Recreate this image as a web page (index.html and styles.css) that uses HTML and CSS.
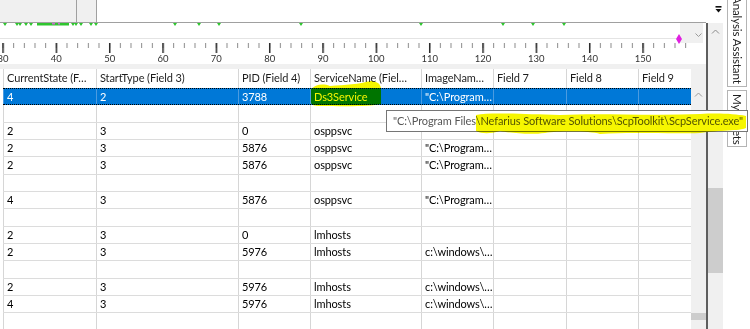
FILE: index.html
```html
<!DOCTYPE html>
<html lang="en">
  <head>
    <meta charset="UTF-8" />
    <meta name="viewport" content="width=device-width, initial-scale=1.0" />
    <title>Message Analyzer</title>

    <link rel="stylesheet" href="styles.css">
  </head>

  <body>
    <div class="app">
      <div class="main">
        <div class="topbar">
          <div class="strip">
            <div class="tabbox"><span></span></div>
          </div>
          <svg class="customize" width="7" height="7" viewBox="0 0 7 7">
            <rect x="0.5" y="0" width="6" height="1.6" fill="#111" />
            <polygon points="0.5,3 6.5,3 3.5,6.5" fill="#111" />
          </svg>
        </div>

        <div class="work">
          <div class="content">
            <!-- timeline overview + ruler -->
            <svg class="ruler" width="706" height="41" viewBox="0 0 706 41">
              <defs>
                <pattern id="minor" x="2.5" y="0" width="10.6667" height="41" patternUnits="userSpaceOnUse">
                  <rect x="0" y="20" width="1" height="5" fill="#8a8a8a" />
                </pattern>
                <pattern id="major" x="2.3" y="0" width="53.3333" height="41" patternUnits="userSpaceOnUse">
                  <rect x="0" y="20" width="1.5" height="10" fill="#2a2a2a" />
                </pattern>
              </defs>
              <line x1="0" y1="15.5" x2="680" y2="15.5" stroke="#e4e4e4" />
              <rect x="680" y="0" width="23" height="20" fill="#f0f0f0" />
              <polyline points="695.5,10.5 698.5,13.5 701.5,10.5" fill="none" stroke="#9a9a9a" />

              <g fill="#2ec52e">
                <polygon points="3,0 7,0 5,3" />
                <polygon points="15,0 19,0 17,3" />
                <polygon points="18,0 22,0 20,3" />
                <polygon points="24,0 28,0 26,3" />
                <polygon points="29,0 33,0 31,3" />
                <rect x="37" y="0" width="32" height="2.5" />
                <polygon points="71,0 75,0 73,3" />
                <polygon points="74,0 78,0 76,3" />
                <polygon points="79,0 83,0 81,3" />
                <polygon points="89,0 93,0 91,3" />
                <polygon points="94,0 98,0 96,3" />
                <polygon points="173,0 177,0 175,3" />
                <polygon points="197,0 201,0 199,3" />
                <polygon points="217,0 221,0 219,3" />
                <polygon points="299,0 303,0 301,3" />
                <polygon points="419,0 423,0 421,3" />
                <polygon points="501,0 505,0 503,3" />
                <polygon points="531,0 535,0 533,3" />
                <polygon points="562,0 566,0 564,3" />
              </g>
              <g fill="#c86ad0">
                <rect x="52" y="0" width="3" height="1.5" />
                <rect x="58" y="0" width="2" height="1.5" />
              </g>
              <polygon points="679,11 682,16 679,21 676,16" fill="#e020e0" />

              <rect x="0" y="0" width="688" height="41" fill="url(#minor)" />
              <rect x="0" y="0" width="690" height="41" fill="url(#major)" />
              <text x="3" y="38.5">30</text>
              <text x="56.3" y="38.5">40</text>
              <text x="109.7" y="38.5">50</text>
              <text x="163" y="38.5">60</text>
              <text x="216.3" y="38.5">70</text>
              <text x="269.7" y="38.5">80</text>
              <text x="323" y="38.5">90</text>
              <text x="376.3" y="38.5">100</text>
              <text x="429.7" y="38.5">110</text>
              <text x="483" y="38.5">120</text>
              <text x="536.3" y="38.5">130</text>
              <text x="589.7" y="38.5">140</text>
              <text x="643" y="38.5">150</text>
            </svg>
            <div class="band"></div>

            <div class="gridwrap">
              <div class="grid">
                <div class="row head">
                  <span>CurrentState (F…</span><span>StartType (Field 3)</span><span>PID (Field 4)</span><span>ServiceName (Fiel…</span><span>ImageNam…</span><span>Field 7</span><span>Field 8</span><span>Field 9</span>
                </div>
                <div class="row sel">
                  <span>4</span><span>2</span><span>3788</span><span>Ds3Service</span><span>"C:\Program…</span><span></span><span></span><span></span>
                </div>
                <div class="row">
                  <span></span><span></span><span></span><span></span><span></span><span></span><span></span><span></span>
                </div>
                <div class="row">
                  <span>2</span><span>3</span><span>0</span><span>osppsvc</span><span></span><span></span><span></span><span></span>
                </div>
                <div class="row">
                  <span>2</span><span>3</span><span>5876</span><span>osppsvc</span><span>"C:\Program…</span><span></span><span></span><span></span>
                </div>
                <div class="row">
                  <span>2</span><span>3</span><span>5876</span><span>osppsvc</span><span>"C:\Program…</span><span></span><span></span><span></span>
                </div>
                <div class="row">
                  <span></span><span></span><span></span><span></span><span></span><span></span><span></span><span></span>
                </div>
                <div class="row">
                  <span>4</span><span>3</span><span>5876</span><span>osppsvc</span><span>"C:\Program…</span><span></span><span></span><span></span>
                </div>
                <div class="row">
                  <span></span><span></span><span></span><span></span><span></span><span></span><span></span><span></span>
                </div>
                <div class="row">
                  <span>2</span><span>3</span><span>0</span><span>lmhosts</span><span></span><span></span><span></span><span></span>
                </div>
                <div class="row">
                  <span>2</span><span>3</span><span>5976</span><span>lmhosts</span><span>c:\windows\…</span><span></span><span></span><span></span>
                </div>
                <div class="row">
                  <span></span><span></span><span></span><span></span><span></span><span></span><span></span><span></span>
                </div>
                <div class="row">
                  <span>2</span><span>3</span><span>5976</span><span>lmhosts</span><span>c:\windows\…</span><span></span><span></span><span></span>
                </div>
                <div class="row">
                  <span>4</span><span>3</span><span>5976</span><span>lmhosts</span><span>c:\windows\…</span><span></span><span></span><span></span>
                </div>
                <div class="row">
                  <span></span><span></span><span></span><span></span><span></span><span></span><span></span><span></span>
                </div>
              </div>
              <div class="vscroll">
                <svg class="caret" width="9" height="5" viewBox="0 0 9 5">
                  <polyline points="1,4.5 4.5,1 8,4.5" fill="none" stroke="#9a9a9a" />
                </svg>
                <span class="nub"></span>
              </div>
            </div>
          </div>

          <div class="splitter"></div>

          <div class="outerscroll">
            <svg class="caret" width="9" height="5" viewBox="0 0 9 5">
              <polyline points="1,4.5 4.5,1 8,4.5" fill="none" stroke="#8a8a8a" />
            </svg>
            <span class="thumb"></span>
          </div>
        </div>
      </div>

      <div class="side">
        <div class="vtab first">Analysis Assistant</div>
        <div class="vtab">My Assets</div>
      </div>

      <div class="tooltip">"C:\Program Files\Nefarius Software Solutions\ScpToolkit\ScpService.exe"</div>

      <!-- highlighter marks on top of the screenshot -->
      <svg class="marker" width="750" height="329" viewBox="0 0 750 329">
        <path d="M311,89 C315,85 322,83 330,86 C345,85 360,84 370,81 C376,81 380,83 381,88 L381,104 C370,107 340,106 320,106 C314,106 311,105 311,102 Z" />
        <path d="M476,115 C490,112 520,114 560,115 C600,113 650,116 700,114 C720,113 735,114 746,116 L746,128 C740,131 720,130 700,133 C670,134 630,132 600,134 C590,131 560,131 545,133 C530,135 510,133 500,131 C490,134 482,134 476,131 Z" />
      </svg>
    </div>
  </body>
</html>
```

FILE: styles.css
```css
body {
  margin: 0;
  font-family: Lato, "Noto Sans", sans-serif;
  font-size: 11px;
  letter-spacing: -0.1px;
  color: #000;
  background: #fff;
}

.app {
  position: relative;
  display: flex;
  width: 750px;
  height: 329px;
  overflow: hidden;
}

.main {
  width: 723px;
  display: flex;
  flex-direction: column;
}

/* top strip */
.topbar {
  display: flex;
  height: 23px;
}
.strip {
  width: 706px;
  height: 22px;
  border-bottom: 1px solid #a0a0a0;
}
.tabbox {
  display: flex;
  width: 96px;
  height: 22px;
  background: #f0f0f0;
  border-right: 1px solid #a0a0a0;
}
.tabbox span {
  width: 76px;
  border-right: 1px solid #a0a0a0;
}
.customize {
  margin: 6px 0 0 9px;
}

.work {
  flex: 1;
  display: flex;
  min-height: 0;
}
.content {
  width: 706px;
  display: flex;
  flex-direction: column;
}

.ruler {
  display: block;
}
.ruler text {
  font-family: Lato, "Noto Sans", sans-serif;
  font-size: 9.5px;
  letter-spacing: 0;
  fill: #333;
  text-anchor: middle;
}
.band {
  height: 5px;
  background: #f0f0f0;
}

/* data grid */
.gridwrap {
  flex: 1;
  display: flex;
  min-height: 0;
}
.grid {
  width: 688px;
  margin-left: 3px;
}
.row {
  display: grid;
  grid-template-columns: 93px 142px 72px 111px 72px 73px 72px 53px;
  height: 17.35px;
  box-sizing: border-box;
  border-bottom: 1px solid #dcdcdc;
}
.row span {
  border-left: 1px solid #d6d6d6;
  padding-left: 3px;
  line-height: 16px;
  white-space: nowrap;
  overflow: hidden;
}
.row.head {
  height: 19px;
  border-bottom: none;
  color: #1e1e1e;
}
.row.head span {
  line-height: 18px;
}
.row.sel {
  background: #0078d7;
  color: #fff;
  border-top: 1px dotted #000;
  border-bottom: 1px dotted #000;
}
.row.sel span {
  border-left-color: #4b9be0;
  line-height: 15px;
}

.vscroll {
  width: 15px;
  background: #f0f0f0;
  display: flex;
  flex-direction: column;
  align-items: center;
}
.vscroll .caret {
  margin-top: 23px;
}
.nub {
  margin-top: auto;
  margin-bottom: 9px;
  width: 15px;
  height: 7px;
  background: #cdcdcd;
}

.splitter {
  width: 2px;
  background: #5e5e5e;
}
.outerscroll {
  width: 15px;
  background: #f0f0f0;
  display: flex;
  flex-direction: column;
  align-items: center;
}
.outerscroll .caret {
  margin-top: 6px;
}
.thumb {
  margin-top: 154px;
  width: 15px;
  height: 85px;
  background: #cdcdcd;
}

/* docked tool windows */
.side {
  width: 27px;
  display: flex;
  flex-direction: column;
}
.vtab {
  writing-mode: vertical-rl;
  width: 20px;
  margin-left: 4px;
  box-sizing: border-box;
  border: 1px solid #b4b4b4;
  padding: 3px 0;
  line-height: 17px;
  font-size: 11.5px;
  color: #1e1e1e;
  white-space: nowrap;
  overflow: hidden;
}
.vtab.first {
  margin-top: -7px;
  padding: 2px 0;
}
.vtab + .vtab {
  margin-top: 3px;
  height: 57px;
}

.tooltip {
  position: absolute;
  left: 386px;
  top: 110px;
  width: 362px;
  height: 22px;
  box-sizing: border-box;
  border: 1px solid #767676;
  background: #fff;
  color: #575757;
  padding-left: 6px;
  line-height: 20px;
  white-space: nowrap;
}

.marker {
  position: absolute;
  top: 0;
  left: 0;
  pointer-events: none;
  mix-blend-mode: multiply;
}
.marker path {
  fill: #f6f600;
}
```
